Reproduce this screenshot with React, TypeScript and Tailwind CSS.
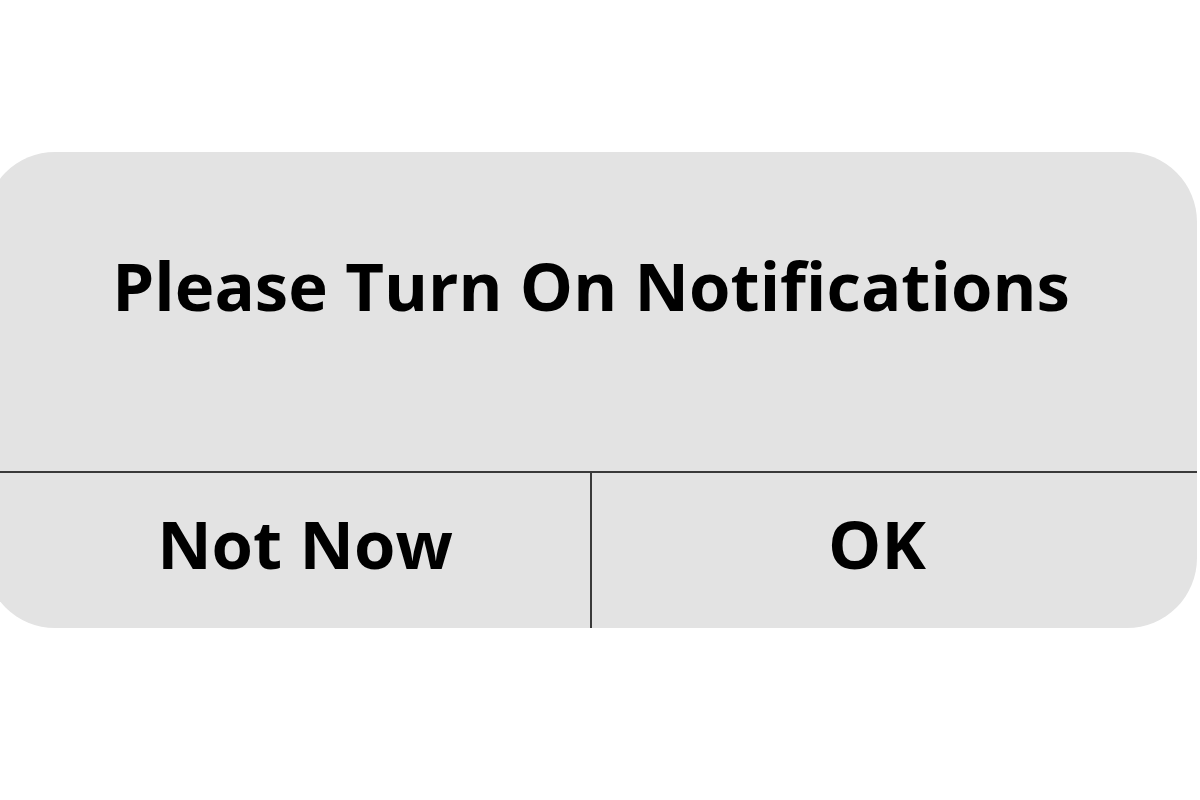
import React from 'react';

const App: React.FC = () => {
  return (
    <div className="h-[800px] w-[1200px] overflow-hidden bg-white pt-[152px]" style={{ fontFamily: '"Open Sans", sans-serif' }}>
      <div className="-ml-[15px] flex w-[1212px] flex-col rounded-[70px] bg-[#e3e3e3]">
        <div className="flex h-[319px] items-center justify-center pb-[52px]">
          <h1 className="text-[67px] font-bold leading-none text-black">Please Turn On Notifications</h1>
        </div>
        <div className="h-[2px] bg-[#3a3a3a]" />
        <div className="flex h-[155px]">
          <button className="flex flex-1 items-center justify-center pb-[14px] pl-[35px] text-[67px] font-bold leading-none text-black">
            Not Now
          </button>
          <div className="w-[2px] bg-[#3a3a3a]" />
          <button className="flex flex-1 items-center justify-center pb-[14px] pr-[35px] text-[67px] font-bold leading-none text-black">
            OK
          </button>
        </div>
      </div>
    </div>
  );
};

export default App;
